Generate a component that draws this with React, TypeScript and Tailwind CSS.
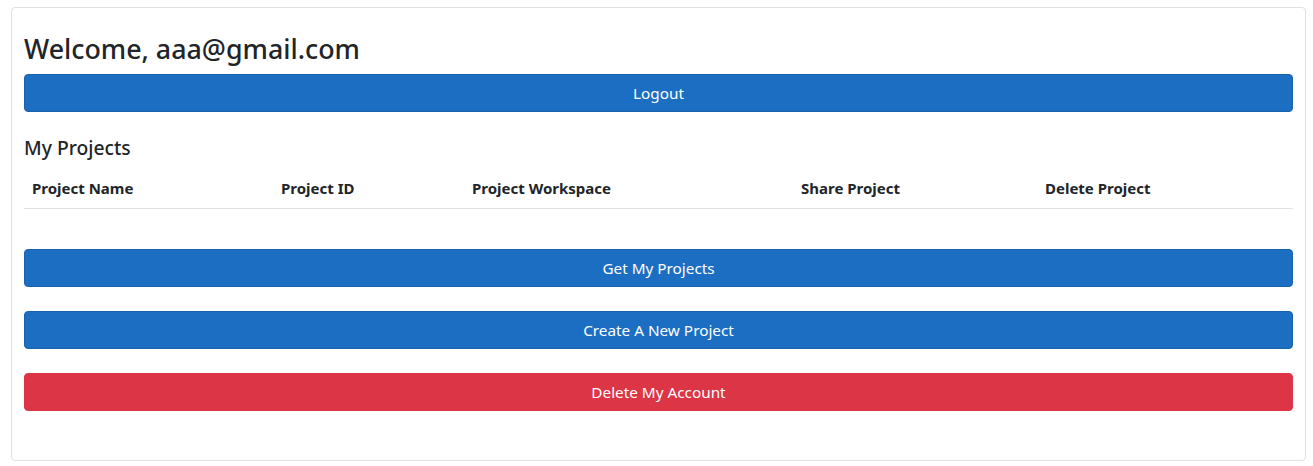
export default function App() {
  const cols = ["Project Name", "Project ID", "Project Workspace", "Share Project", "Delete Project"];

  return (
    <div className="min-h-screen bg-white pt-[7px] pl-[11px] pr-[7px] font-['Noto_Sans',sans-serif] text-[#212529]">
      <div className="rounded border border-[#dee2e6] px-3 pt-6 pb-[49px]">
        <h3 className="text-[26.8px] leading-[34px] font-medium mb-2">Welcome, aaa@gmail.com</h3>
        <button className="w-full h-[38px] rounded border border-[#1861ac] bg-[#1b6ec2] text-white text-[15.3px]">
          Logout
        </button>

        <h5 className="mt-6 text-[19.3px] leading-6 font-medium">My Projects</h5>
        <div className="mt-2 grid grid-cols-[249px_191px_329px_244px_1fr] border-b border-[#dee2e6] font-bold text-[15px]">
          {cols.map((c) => (
            <div key={c} className="px-2 py-2 leading-6">
              {c}
            </div>
          ))}
        </div>

        <div className="mt-10 flex flex-col gap-6">
          <button className="w-full h-[38px] rounded border border-[#1861ac] bg-[#1b6ec2] text-white text-[15.3px]">
            Get My Projects
          </button>
          <button className="w-full h-[38px] rounded border border-[#1861ac] bg-[#1b6ec2] text-white text-[15.3px]">
            Create A New Project
          </button>
          <button className="w-full h-[38px] rounded border border-[#dc3545] bg-[#dc3545] text-white text-[15.3px]">
            Delete My Account
          </button>
        </div>
      </div>
    </div>
  );
}
